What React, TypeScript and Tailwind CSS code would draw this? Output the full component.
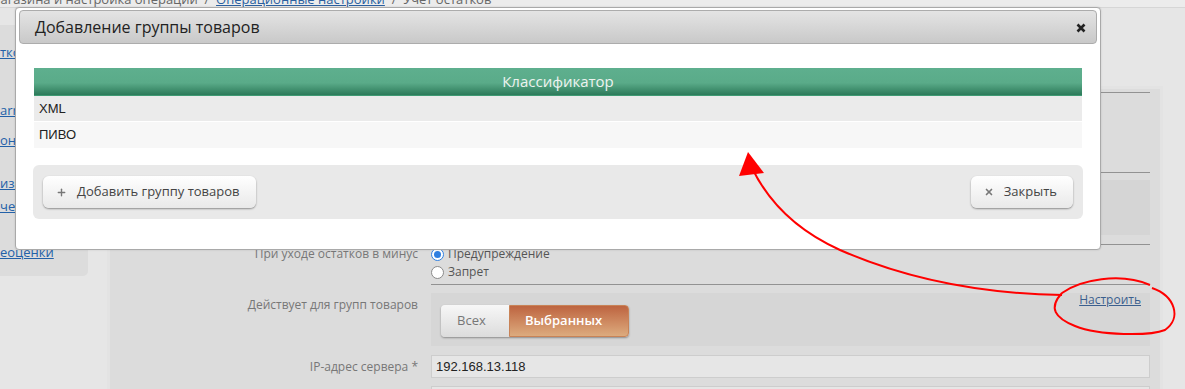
import { Plus, X } from "lucide-react"

const SIDE_LINKS = [
  { text: "тков", top: "mt-[19px]" },
  { text: "arry", top: "mt-[42px]" },
  { text: "онны", top: "mt-[14px]" },
  { text: "изац", top: "mt-[27px]" },
  { text: "четы", top: "mt-[7px]" },
  { text: "еоценки", top: "mt-[30px]" },
]

function Radio({ checked }: { checked?: boolean }) {
  return checked ? (
    <span className="w-[13px] h-[13px] rounded-full border border-[#2f7fe0] bg-white flex items-center justify-center">
      <span className="w-[7px] h-[7px] rounded-full bg-[#2f7fe0]" />
    </span>
  ) : (
    <span className="w-[13px] h-[13px] rounded-full border border-[#8a8a8a] bg-white" />
  )
}

function DlgButton({ icon, label }: { icon: "plus" | "x"; label: string }) {
  return (
    <button className="h-[32px] flex items-center gap-[10px] pl-[13px] pr-[16px] rounded-[6px] bg-gradient-to-b from-white to-[#e9e9e9] shadow-[0_1px_2px_rgba(0,0,0,0.4)] text-[13px] text-[#444]">
      {icon === "plus" ? (
        <Plus className="w-[11px] h-[11px] text-[#777]" strokeWidth={3} />
      ) : (
        <X className="w-[10px] h-[10px] text-[#777]" strokeWidth={4} />
      )}
      <span>{label}</span>
    </button>
  )
}

export default function App() {
  return (
    <div className="relative w-[1185px] h-[389px] overflow-hidden bg-[#e6e6e6] font-['Open_Sans',sans-serif]">
      {/* Breadcrumbs, cut by the window top */}
      <div className="h-[8px] overflow-hidden border-b border-[#d6d6d6] bg-[#ececec]">
        <div className="-mt-[10px] -ml-[9px] leading-[18px] text-[13px] text-[#666] whitespace-nowrap">
          магазина и настройка операций&nbsp;&nbsp;/&nbsp;&nbsp;
          <span className="text-[#2a5fa0] underline">Операционные настройки</span>
          &nbsp;&nbsp;/&nbsp;&nbsp;Учет остатков
        </div>
      </div>

      <div className="flex items-start">
        {/* Sidebar */}
        <div className="mt-[17px] w-[88px] h-[251px] bg-[#dcdcdc] rounded-br-[5px] flex flex-col text-[13px] leading-[16px]">
          {SIDE_LINKS.map((l) => (
            <a key={l.text} className={`${l.top} text-[#2361a8] underline whitespace-nowrap`}>
              {l.text}
            </a>
          ))}
        </div>

        {/* Main panel */}
        <div className="ml-[19px] mt-[78px] w-[1056px] h-[320px] bg-[#dcdcdc] border-[3px] border-[#e3e3e3] pt-[3px] pr-[10px]">
          <div className="grid grid-cols-[308px_719px] gap-x-[13px] text-[12px] text-[#777]">
            <div />
            <div className="h-[80px] border-t border-[#929292]" />

            <div />
            <div className="h-[72px] border-t border-[#929292] pt-[7px]">
              <div className="h-[55px] bg-[#d5d5d5]" />
            </div>

            <div className="text-right leading-[18px] pt-[1px]">При уходе остатков в минус</div>
            <div className="border-y border-[#929292] h-[41px] leading-[18px] text-[#555]">
              <label className="flex items-center gap-[4px]">
                <Radio checked />
                Предупреждение
              </label>
              <label className="flex items-center gap-[4px]">
                <Radio />
                Запрет
              </label>
            </div>

            <div className="text-right leading-[16px] mt-[12px]">Действует для групп товаров</div>
            <div className="mt-[8px] h-[53px] bg-[#d6d6d6] flex items-start justify-between pl-[10px] pr-[9px]">
              <div className="mt-[12px] flex h-[32px] rounded-[4px] shadow-[0_1px_2px_rgba(0,0,0,0.35)] text-[13px]">
                <span className="w-[68px] flex items-center pl-[16px] rounded-l-[4px] bg-gradient-to-b from-[#f7f7f7] to-[#dcdcdc] text-[#777]">
                  Всех
                </span>
                <span className="w-[120px] flex items-center pl-[15px] rounded-r-[4px] border border-[#c88357] bg-gradient-to-b from-[#bd6440] to-[#dcab7e] text-white font-semibold">
                  Выбранных
                </span>
              </div>
              <a className="mt-[-1px] text-[12px] leading-[16px] text-[#3b5f8e] underline">Настроить</a>
            </div>

            <div className="text-right mt-[9px] h-[23px] flex items-center justify-end">IP-адрес сервера *</div>
            <div className="mt-[9px] h-[23px] bg-[#e6e6e6] border border-[#cdcdcd] flex items-center pl-[4px] font-['Liberation_Sans',sans-serif] text-[13px] text-[#222]">
              192.168.13.118
            </div>

            <div />
            <div className="mt-[8px] h-[23px] bg-[#e6e6e6] border border-[#cdcdcd]" />
          </div>
        </div>
      </div>

      {/* Dialog */}
      <div className="absolute left-[15px] top-[7px] w-[1086px] h-[243px] bg-white border border-[#a9a9a9] rounded-[4px] shadow-[0_0_2px_rgba(0,0,0,0.15)]">
        <div className="mx-[3px] mt-[2px] h-[34px] flex items-center justify-between pl-[15px] pr-[10px] border border-[#acacac] rounded-[4px] bg-gradient-to-b from-[#e4e4e4] to-[#c9c9c9]">
          <span className="text-[16px] text-[#222]">Добавление группы товаров</span>
          <svg width="10" height="10" viewBox="0 0 10 10" className="mt-[1px]">
            <path d="M1.5 1.5 L8.5 8.5 M8.5 1.5 L1.5 8.5" stroke="#222" strokeWidth="2.6" />
          </svg>
        </div>

        <div className="px-[18px] pt-[24px]">
          <div className="h-[28px] flex items-center justify-center bg-gradient-to-b from-[#5eaf8e] via-[#5aab89] via-55% to-[#2c7a5a] border-b border-[#3f9a73] text-[15px] text-[#eef3f0]">
            Классификатор
          </div>
          <div className="font-['Liberation_Sans',sans-serif] text-[13px] text-[#222]">
            <div className="h-[26px] flex items-center pl-[5px] bg-[#ebebeb] border-b border-white">XML</div>
            <div className="h-[26px] flex items-center pl-[5px] bg-[#f7f7f7]">ПИВО</div>
          </div>

          <div className="-mx-px mt-[17px] h-[54px] rounded-[6px] bg-[#e9e9e9] flex items-start justify-between pt-[11px] px-[10px]">
            <DlgButton icon="plus" label="Добавить группу товаров" />
            <DlgButton icon="x" label="Закрыть" />
          </div>
        </div>
      </div>

      {/* Red hand annotation */}
      <svg className="absolute inset-0 pointer-events-none" width="1185" height="389" viewBox="0 0 1185 389">
        <path
          d="M1062 295 C1000 294 920 285 840 250 C800 232 770 205 752 168"
          fill="none"
          stroke="#ff0000"
          strokeWidth="2"
        />
        <path
          d="M1062 293 C1080 280 1120 272 1150 285 M1152 288 C1175 296 1182 318 1165 330 C1150 336 1100 336 1075 326 C1055 318 1048 308 1062 293"
          fill="none"
          stroke="#ff0000"
          strokeWidth="2"
        />
        <polygon points="748,152 739,176 764,173" fill="#ff0000" />
      </svg>
    </div>
  )
}
